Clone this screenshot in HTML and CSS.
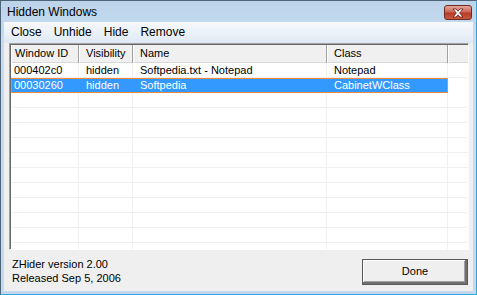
FILE: index.html
```html
<!DOCTYPE html>
<html>
<head>
<meta charset="utf-8">
<title>Hidden Windows</title>
<link rel="stylesheet" href="styles.css">
</head>
<body>
<div class="window">
  <div class="titlebar">
    <span class="title">Hidden Windows</span>
    <div class="close-btn">
      <svg width="14" height="10" viewBox="0 0 14 10">
        <path d="M2 1 L5 1 L7 3.2 L9 1 L12 1 L8.6 5 L12 9 L9 9 L7 6.8 L5 9 L2 9 L5.4 5 Z" fill="#fff" stroke="#5a1a14" stroke-width="0.8" stroke-linejoin="round"/>
      </svg>
    </div>
  </div>
  <div class="client">
    <div class="menubar">
      <span class="menu-item">Close</span>
      <span class="menu-item">Unhide</span>
      <span class="menu-item">Hide</span>
      <span class="menu-item">Remove</span>
    </div>
    <div class="listwrap">
      <div class="list">
        <div class="header">
          <div class="hcell c1">Window ID</div>
          <div class="hcell c2">Visibility</div>
          <div class="hcell c3">Name</div>
          <div class="hcell c4">Class</div>
          <div class="hcell c5"></div>
        </div>
        <div class="rows">
          <div class="row">
            <div class="cell c1">000402c0</div>
            <div class="cell c2">hidden</div>
            <div class="cell c3">Softpedia.txt - Notepad</div>
            <div class="cell c4">Notepad</div>
            <div class="cell c5"></div>
          </div>
          <div class="row selected">
            <div class="sel">
              <div class="cell c1">00030260</div>
              <div class="cell c2">hidden</div>
              <div class="cell c3">Softpedia</div>
              <div class="cell c4">CabinetWClass</div>
            </div>
            <div class="cell c5"></div>
          </div>
          <div class="row"><div class="cell c1"></div><div class="cell c2"></div><div class="cell c3"></div><div class="cell c4"></div><div class="cell c5"></div></div>
          <div class="row"><div class="cell c1"></div><div class="cell c2"></div><div class="cell c3"></div><div class="cell c4"></div><div class="cell c5"></div></div>
          <div class="row"><div class="cell c1"></div><div class="cell c2"></div><div class="cell c3"></div><div class="cell c4"></div><div class="cell c5"></div></div>
          <div class="row"><div class="cell c1"></div><div class="cell c2"></div><div class="cell c3"></div><div class="cell c4"></div><div class="cell c5"></div></div>
          <div class="row"><div class="cell c1"></div><div class="cell c2"></div><div class="cell c3"></div><div class="cell c4"></div><div class="cell c5"></div></div>
          <div class="row"><div class="cell c1"></div><div class="cell c2"></div><div class="cell c3"></div><div class="cell c4"></div><div class="cell c5"></div></div>
          <div class="row"><div class="cell c1"></div><div class="cell c2"></div><div class="cell c3"></div><div class="cell c4"></div><div class="cell c5"></div></div>
          <div class="row"><div class="cell c1"></div><div class="cell c2"></div><div class="cell c3"></div><div class="cell c4"></div><div class="cell c5"></div></div>
          <div class="row"><div class="cell c1"></div><div class="cell c2"></div><div class="cell c3"></div><div class="cell c4"></div><div class="cell c5"></div></div>
          <div class="row"><div class="cell c1"></div><div class="cell c2"></div><div class="cell c3"></div><div class="cell c4"></div><div class="cell c5"></div></div>
          <div class="row"><div class="cell c1"></div><div class="cell c2"></div><div class="cell c3"></div><div class="cell c4"></div><div class="cell c5"></div></div>
        </div>
      </div>
    </div>
    <div class="footer">
      <div class="about">
        <div>ZHider version 2.00</div>
        <div>Released Sep 5, 2006</div>
      </div>
      <div class="done-btn">Done</div>
    </div>
  </div>
</div>
</body>
</html>
```

FILE: styles.css
```css
html, body {
  margin: 0;
  padding: 0;
  width: 477px;
  height: 295px;
  overflow: hidden;
  background: #c4d9ee;
}

.window {
  width: 477px;
  height: 295px;
  box-sizing: border-box;
  border: 1px solid;
  border-color: #4d6479 #38a4d8 #38a4d8 #4d6479;
  background: linear-gradient(#bcd3ea, #c8dcf0 40px, #c4d9ee);
  display: flex;
  flex-direction: column;
  font-family: "Liberation Sans", Arial, sans-serif;
  color: #000;
}

.titlebar {
  height: 21px;
  box-sizing: border-box;
  padding: 2px 0 0 6px;
  display: flex;
  align-items: flex-start;
}

.title {
  font-size: 12px;
  line-height: 19px;
  color: #000;
}

.close-btn {
  margin-left: auto;
  margin-right: 4px;
  margin-top: 2px;
  width: 28px;
  height: 15px;
  box-sizing: border-box;
  border: 1px solid #6e2b23;
  border-radius: 3px;
  background: linear-gradient(#e4a89c, #cc6656 45%, #b83c2a 55%, #c9583f);
  display: flex;
  align-items: center;
  justify-content: center;
}

.client {
  flex: 1;
  margin: 0 3px 3px 3px;
  background: #efefef;
  display: flex;
  flex-direction: column;
}

.menubar {
  height: 21px;
  display: flex;
  background: linear-gradient(#f6f9fd, #e9f0f8 60%, #dfe8f3);
  padding-left: 1px;
}

.menu-item {
  font-size: 12px;
  line-height: 21px;
  padding: 0 6px;
}

.listwrap {
  height: 207px;
  padding: 0 4px 0 5px;
}

.list {
  height: 207px;
  box-sizing: border-box;
  border: 1px solid;
  border-color: #a0a0a0 #ffffff #ffffff #a0a0a0;
  display: flex;
  flex-direction: column;
  overflow: hidden;
  position: relative;
}

.header {
  display: flex;
  height: 19px;
  box-sizing: border-box;
  border-top: 1px solid #696969;
  border-left: 1px solid #696969;
  border-bottom: 1px solid #a0a0a0;
  background: #f0f0f0;
  font-size: 11px;
  flex: none;
}

.hcell {
  box-sizing: border-box;
  height: 18px;
  line-height: 17px;
  padding-left: 7px;
  border-right: 1px solid #a0a0a0;
  box-shadow: inset 1px 0 #ffffff, inset 0 -1px #d8d8d8;
  white-space: nowrap;
  overflow: hidden;
}

.c1 { width: 68px; flex: none; }
.c2 { width: 54px; flex: none; }
.c3 { width: 194px; flex: none; }
.c4 { width: 121px; flex: none; }
.c5 { flex: 1; }

.hcell.c1 { padding-left: 4px; }
.hcell.c5 { border-right: none; }

.rows {
  flex: 1;
  background: #ffffff;
  border-left: 1px solid #696969;
  overflow: hidden;
  font-size: 11px;
}

.row {
  display: flex;
  height: 15px;
  box-sizing: border-box;
  border-bottom: 1px solid #f0f0f0;
}

.cell {
  box-sizing: border-box;
  height: 14px;
  line-height: 14px;
  padding-left: 7px;
  border-right: 1px solid #f0f0f0;
  white-space: nowrap;
  overflow: hidden;
}

.cell.c1 { padding-left: 3px; }
.cell.c5 { border-right: none; }

.row.selected {
  border-bottom: none;
}

.sel {
  display: flex;
  height: 15px;
  box-sizing: border-box;
  border: 1px solid #ee8a3a;
  background: #3399ff;
  color: #ffffff;
}

.sel .cell {
  height: 13px;
  line-height: 12px;
  border-right: 1px solid transparent;
}

.sel .cell.c1 { width: 67px; padding-left: 2px; }
.sel .cell.c4 { width: 120px; }

.footer {
  flex: 1;
  display: flex;
  justify-content: space-between;
  align-items: flex-start;
  padding: 7px 5px 0 8px;
}

.about {
  font-size: 11px;
  line-height: 14px;
}

.done-btn {
  margin-top: 2px;
  width: 106px;
  height: 26px;
  box-sizing: border-box;
  border: 1px solid #5a5a5a;
  box-shadow: inset -2px -2px #707070, inset 1px 1px #ffffff, inset -3px -3px #a0a0a0;
  background: #efefef;
  font-size: 11px;
  line-height: 23px;
  text-align: center;
}
```
